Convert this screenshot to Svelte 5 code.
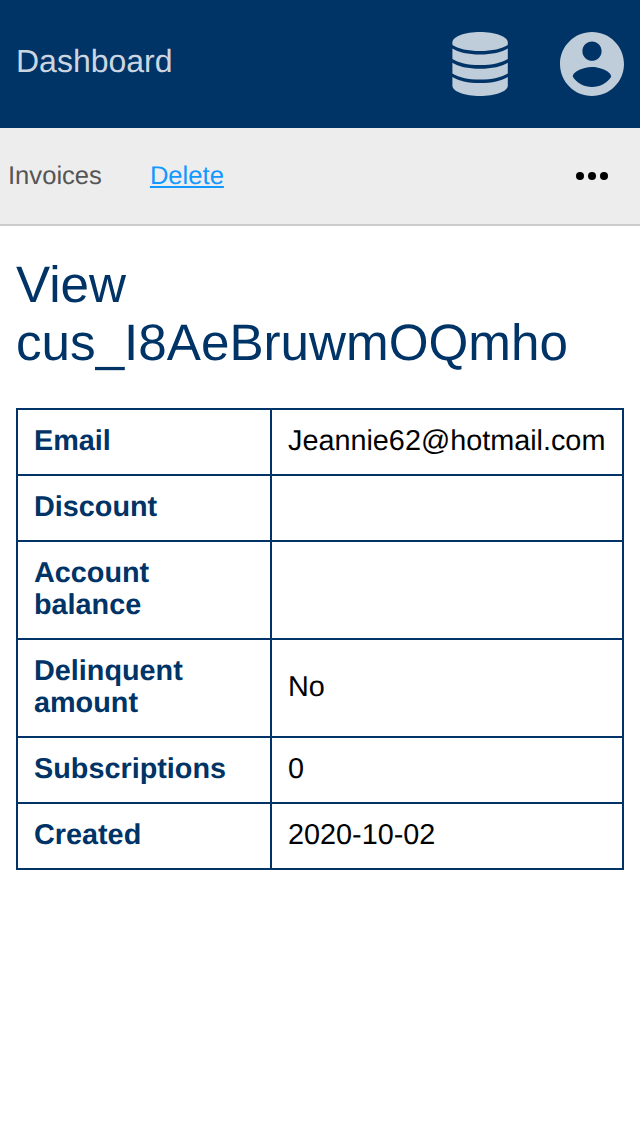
<script>
  const rows = [
    ['Email', 'Jeannie62@hotmail.com'],
    ['Discount', ''],
    ['Account balance', ''],
    ['Delinquent amount', 'No'],
    ['Subscriptions', '0'],
    ['Created', '2020-10-02']
  ];
</script>

<header>
  <span class="brand">Dashboard</span>
  <div class="icons">
    <svg width="64" height="64" viewBox="0 0 64 64" aria-hidden="true">
      <path d="M32 0C17 0 4.400 4.600 4.400 10.300V13C10 16.800 20 19 32 19S54 16.800 59.800 13V10.300C59.800 4.600 47 0 32 0Z" />
      <path d="M4.400 16.400C10 20.200 20 22.400 32 22.400S54 20.200 59.800 16.400V27C54 30.800 44 33.100 32 33.100S10 30.800 4.400 27Z" />
      <path d="M4.400 30.700C10 34.500 20 36.700 32 36.700S54 34.500 59.800 30.700V41.400C54 45.200 44 47.500 32 47.500S10 45.200 4.400 41.400Z" />
      <path d="M4.400 44.900C10 48.700 20 51 32 51S54 48.700 59.800 44.900V53.700C59.800 59.400 47 64 32 64S4.400 59.400 4.400 53.700Z" />
    </svg>
    <svg width="64" height="64" viewBox="2 2 20 20" aria-hidden="true">
      <path d="M12 2C6.480 2 2 6.480 2 12s4.480 10 10 10 10-4.480 10-10S17.520 2 12 2zm0 3c1.660 0 3 1.340 3 3s-1.340 3-3 3-3-1.340-3-3 1.340-3 3-3zm0 14.200c-2.500 0-4.710-1.280-6-3.220.03-1.990 4-3.080 6-3.080 1.990 0 5.970 1.090 6 3.080-1.290 1.940-3.500 3.220-6 3.220z" />
    </svg>
  </div>
</header>
<nav>
  <span class="item">Invoices</span>
  <a href="#delete">Delete</a>
  <svg class="more" width="32" height="8" viewBox="0 0 32 8" aria-hidden="true">
    <circle cx="4" cy="4" r="4" /><circle cx="16" cy="4" r="4" /><circle cx="28" cy="4" r="4" />
  </svg>
</nav>
<main>
  <h1>View cus_I8AeBruwmOQmho</h1>
  <table>
    <tbody>
      {#each rows as [label, value]}
        <tr><th>{label}</th><td>{value}</td></tr>
      {/each}
    </tbody>
  </table>
</main>

<style>
  :global(body) {
    margin: 0;
    background: #fff;
    font-family: "Liberation Sans", Arial, sans-serif;
    text-rendering: geometricPrecision;
  }
  header {
    box-sizing: border-box;
    height: 128px;
    padding: 0 16px;
    display: flex;
    align-items: center;
    justify-content: space-between;
    background: #036;
  }
  .brand {
    font-size: 32px;
    line-height: 36px;
    padding-bottom: 6px;
    color: #ccd6e0;
  }
  .icons {
    display: flex;
    gap: 48px;
    fill: #bfccd9;
  }
  svg { display: block; }
  nav {
    box-sizing: border-box;
    height: 98px;
    padding: 0 32px 0 8px;
    display: flex;
    align-items: center;
    background: #ededed;
    border-bottom: 2px solid #ccc;
    font-size: 25.6px;
    line-height: 30px;
  }
  .item { color: #555; }
  a {
    margin-left: 48px;
    color: #1398ff;
    text-decoration-thickness: 2px;
    text-underline-offset: 2px;
  }
  .more { margin-left: auto; }
  main { padding: 30px 16px; }
  h1 {
    margin: 0 0 36px;
    font-size: 51.2px;
    line-height: 58px;
    font-weight: 400;
    color: #036;
  }
  table {
    width: 608px;
    table-layout: fixed;
    border-collapse: collapse;
    font-size: 28.8px;
    line-height: 32px;
  }
  th, td {
    height: 32px;
    padding: 15px 16px 17px;
    border: 2px solid #036;
    text-align: left;
    vertical-align: middle;
  }
  th {
    width: 220px;
    color: #036;
  }
  td { color: #000; }
</style>
